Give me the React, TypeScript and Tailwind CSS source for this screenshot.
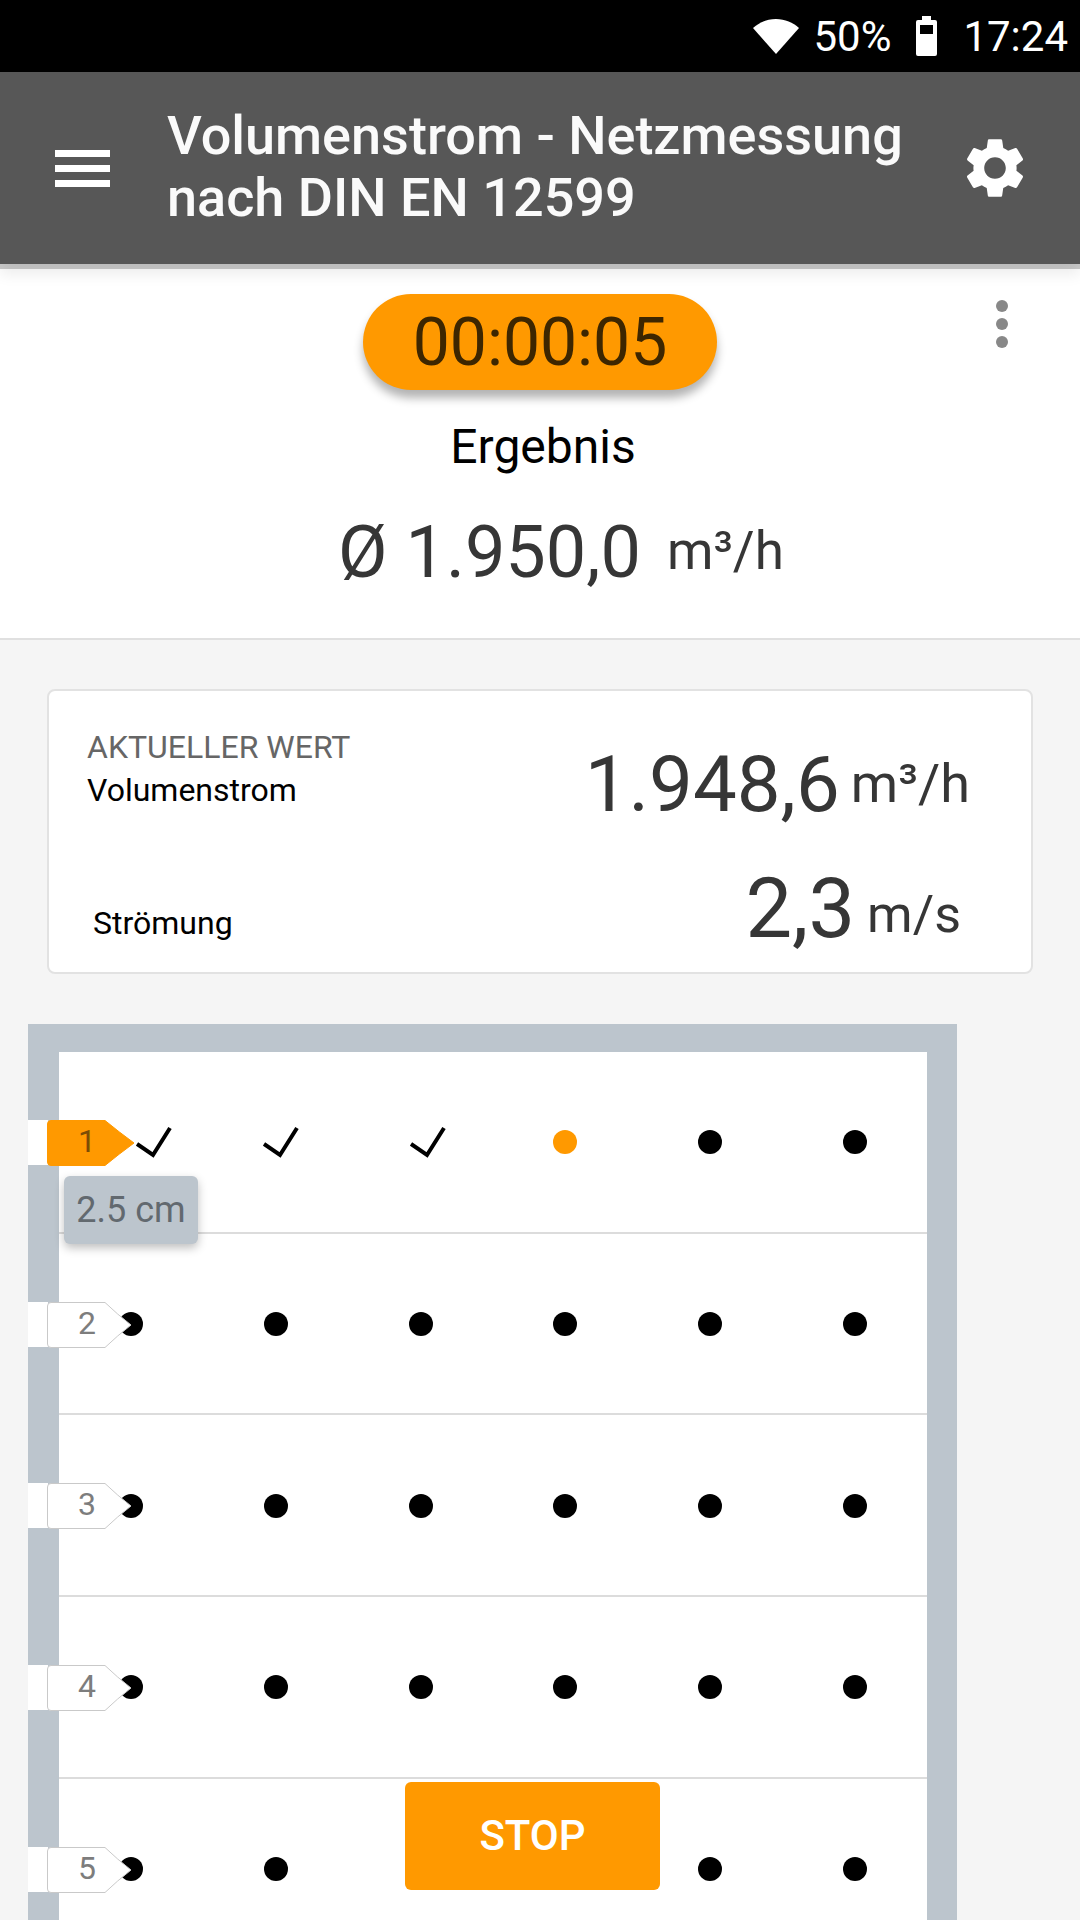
const rows = [1, 2, 3, 4, 5];
const columns = [0, 1, 2, 3, 4, 5];

const Check = ({ className }: { className: string }) => (
  <svg viewBox="0 0 36 32" className={`h-[32px] w-[36px] ${className}`}>
    <path d="M1 18 L17 29 L34 2" fill="none" stroke="#000" strokeWidth="4" />
  </svg>
);

const Dot = ({ active }: { active?: boolean }) => (
  <div className={`h-[24px] w-[24px] rounded-full ${active ? "bg-[#ff9900]" : "bg-black"}`}></div>
);

// Number tab that sticks out of the duct wall on the left of each row
const Tab = ({ n, active }: { n: number; active: boolean }) => (
  <div className="absolute top-[68px] left-[-31px] h-[45px] w-[110px]">
    <div className="absolute inset-y-[0px] left-0 w-[20px] bg-white"></div>
    <svg viewBox="0 0 88 46" className="absolute top-0 left-[19px] h-[46px] w-[88px]">
      <path
        d={
          active
            ? "M4 0.5 H58 Q72 12 87 23 Q72 34 58 45.5 H4 Q0.5 45.5 0.5 42 V4 Q0.5 0.5 4 0.5 Z"
            : "M4 0.5 H58 Q70 12 84 23 Q70 34 58 45.5 H4 Q0.5 45.5 0.5 42 V4 Q0.5 0.5 4 0.5 Z"
        }
        fill={active ? "#ff9900" : "#fff"}
        stroke={active ? "#ff9900" : "#c9c9c9"}
        strokeWidth="1"
      />
    </svg>
    <span className={`absolute top-0 left-[24px] w-[70px] text-center text-[32px] leading-[43px] ${active ? "text-[#7a4c05]" : "text-[#7d7d7d]"}`}>
      {n}
    </span>
  </div>
);

export default function App() {
  return (
    <div className="relative h-[1920px] w-[1080px] overflow-hidden bg-[#f5f5f5] font-['Roboto',sans-serif]">
      {/* status bar */}
      <div className="flex h-[72px] items-center justify-end bg-black pr-[12px] text-[42px] text-white">
        <svg viewBox="0 0 46 35" className="mr-[14px] h-[35px] w-[46px]">
          <path d="M0 9C6 3.500 14 0 23 0S40 3.500 46 9L23 35Z" fill="#fff" />
        </svg>
        <span>50%</span>
        <svg viewBox="0 0 21 40" className="mr-[26px] ml-[25px] h-[40px] w-[21px]">
          <path d="M6 0H15V4H19Q21 4 21 6V38Q21 40 19 40H2Q0 40 0 38V6Q0 4 2 4H6Z" fill="#fff" />
          <rect x="4" y="9" width="13" height="9" fill="#000" />
        </svg>
        <span>17:24</span>
      </div>

      {/* app bar */}
      <div className="relative z-10 flex h-[192px] items-center bg-[#575757] shadow-[0_5px_0_rgba(0,0,0,0.2),0_10px_14px_rgba(0,0,0,0.08)]">
        <div className="ml-[55px] flex w-[55px] flex-col gap-[8px]">
          <div className="h-[7px] bg-white"></div>
          <div className="h-[7px] bg-white"></div>
          <div className="h-[7px] bg-white"></div>
        </div>
        <h1 className="ml-[57px] w-[780px] pb-[2px] text-[54px] leading-[62px] font-medium text-[#fafafa]">
          Volumenstrom - Netzmessung
          <br />
          nach DIN EN 12599
        </h1>
        <svg viewBox="0 0 24 24" className="ml-[12px] h-[72px] w-[72px]" fill="#fff">
          <path d="M19.14 12.94c.04-.3.06-.61.06-.94 0-.32-.02-.64-.07-.94l2.03-1.58a.49.49 0 0 0 .12-.61l-1.92-3.32a.49.49 0 0 0-.59-.22l-2.39.96c-.5-.38-1.03-.7-1.62-.94l-.36-2.54a.48.48 0 0 0-.48-.41h-3.84c-.24 0-.43.17-.47.41l-.36 2.54c-.59.24-1.13.57-1.62.94l-2.39-.96c-.22-.08-.47 0-.59.22L2.74 8.87c-.12.21-.08.47.12.61l2.03 1.58c-.05.3-.09.63-.09.94s.02.64.07.94l-2.03 1.58a.49.49 0 0 0-.12.61l1.92 3.32c.12.22.37.29.59.22l2.39-.96c.5.38 1.03.7 1.62.94l.36 2.54c.05.24.24.41.48.41h3.84c.24 0 .44-.17.47-.41l.36-2.54c.59-.24 1.13-.56 1.62-.94l2.39.96c.22.08.47 0 .59-.22l1.92-3.32c.12-.22.07-.47-.12-.61l-2.01-1.58zM12 15.6c-1.98 0-3.6-1.62-3.6-3.6s1.62-3.6 3.6-3.6 3.6 1.62 3.6 3.6-1.62 3.6-3.6 3.6z" />
        </svg>
      </div>

      {/* result */}
      <div className="relative flex h-[376px] flex-col items-center border-b-2 border-[#e0e0e0] bg-white pt-[30px]">
        <div className="flex h-[96px] w-[354px] items-center justify-center rounded-full bg-[#ff9900] text-[66px] text-[#3d2600] shadow-[0_8px_10px_rgba(0,0,0,0.3)]">
          00:00:05
        </div>
        <div className="absolute top-[36px] right-[72px] flex flex-col gap-[6px]">
          <div className="h-[12px] w-[12px] rounded-full bg-[#888]"></div>
          <div className="h-[12px] w-[12px] rounded-full bg-[#888]"></div>
          <div className="h-[12px] w-[12px] rounded-full bg-[#888]"></div>
        </div>
        <div className="mt-[30px] ml-[6px] text-[48px] leading-[54px] text-black">Ergebnis</div>
        <div className="mt-[37px] ml-[42px] flex items-baseline text-[#363636]">
          <span className="text-[72px] leading-[84px]">Ø 1.950,0</span>
          <span className="ml-[26px] translate-y-[-8px] text-[53px]">m³/h</span>
        </div>
      </div>

      {/* current values */}
      <div className="mt-[49px] ml-[47px] h-[285px] w-[986px] rounded-[8px] border-2 border-[#e2e2e2] bg-white">
        <div className="flex h-[172px] items-start justify-between">
          <div className="mt-[38px] ml-[38px]">
            <div className="text-[32px] leading-[36px] text-[#666]">AKTUELLER WERT</div>
            <div className="mt-[7px] text-[32px] leading-[36px] text-black">Volumenstrom</div>
          </div>
          <div className="mt-[48px] mr-[61px] flex items-baseline text-[#363636]">
            <span className="text-[78px] leading-[92px]">1.948,6</span>
            <span className="ml-[11px] translate-y-[-9px] text-[54px]">m³/h</span>
          </div>
        </div>
        <div className="flex items-start justify-between">
          <div className="mt-[42px] ml-[44px] text-[32px] leading-[36px] text-black">Strömung</div>
          <div className="mr-[70px] flex items-baseline text-[#363636]">
            <span className="text-[83px] leading-[92px]">2,3</span>
            <span className="ml-[12px] translate-y-[-5px] text-[52px]">m/s</span>
          </div>
        </div>
      </div>

      {/* measuring grid */}
      <div className="relative mt-[50px] ml-[28px] w-[929px] border-t-[28px] border-r-[30px] border-l-[31px] border-t-[#bcc5cd] border-r-[#bcc5cd] border-l-[#bcc5cd] bg-white">
        {rows.map((row) => (
          <div key={row} className="relative grid h-[181.7px] grid-cols-6 border-b-2 border-[#dcdcdc] pt-[1px]">
            <Tab n={row} active={row === 1} />
            {columns.map((col) => (
              <div key={col} className="flex items-center justify-center">
                {row === 1 && col === 0 && <Check className="ml-[46px]" />}
                {row === 1 && col === 1 && <Check className="ml-[10px]" />}
                {row === 1 && col === 2 && <Check className="ml-[14px]" />}
                {row === 1 && col === 3 && <Dot active />}
                {(row > 1 || col > 3) && <Dot />}
              </div>
            ))}
            {row === 1 && (
              <div className="absolute top-[124px] left-[5px] flex h-[68px] w-[134px] items-center justify-center rounded-[6px] bg-[#bcc5cd] text-[36px] text-[#62696f] shadow-[0_4px_10px_rgba(0,0,0,0.25)]">
                2.5 cm
              </div>
            )}
          </div>
        ))}
        <button className="absolute top-[730px] left-[346px] h-[108px] w-[255px] rounded-[6px] bg-[#ff9900] pb-[2px] text-[42px] font-medium text-white">
          STOP
        </button>
      </div>
    </div>
  );
}
